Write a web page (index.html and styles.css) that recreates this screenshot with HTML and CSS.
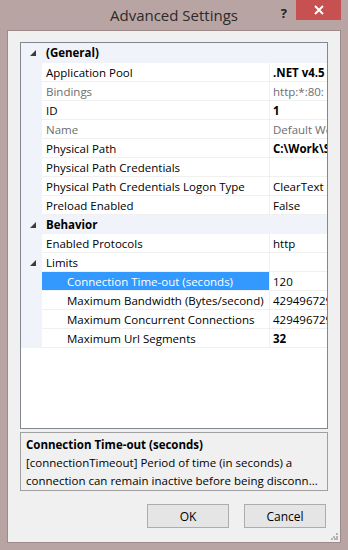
FILE: index.html
```html
<!DOCTYPE html>
<html lang="en">
<head>
    <meta charset="UTF-8">
    <title>Advanced Settings</title>
    <link rel="stylesheet" href="styles.css">
</head>
<body>

    <div class="window">

        <!-- Title bar -->
        <div class="titlebar">
            <span></span>
            <span class="title">Advanced Settings</span>
            <div class="controls">
                <span class="help">?</span>
                <span class="close">
                    <svg width="10" height="10" viewBox="0 0 10 10"><path d="M1 1 L9 9 M9 1 L1 9" stroke="#fff" stroke-width="2"/></svg>
                </span>
            </div>
        </div>

        <div class="client">

            <!-- Property grid -->
            <div class="grid">
                <div class="row category">
                    <span class="gutter"><svg width="6" height="6" viewBox="0 0 6 6"><polygon points="6,0 6,6 0,6" fill="#3c3c3c"/></svg></span>
                    <span class="name">(General)</span>
                </div>
                <div class="row"><span class="gutter"></span><span class="name">Application Pool</span><span class="value bold">.NET v4.5</span></div>
                <div class="row readonly"><span class="gutter"></span><span class="name">Bindings</span><span class="value">http:*:80:</span></div>
                <div class="row"><span class="gutter"></span><span class="name">ID</span><span class="value bold">1</span></div>
                <div class="row readonly"><span class="gutter"></span><span class="name">Name</span><span class="value">Default Web Site</span></div>
                <div class="row"><span class="gutter"></span><span class="name">Physical Path</span><span class="value bold">C:\Work\Site</span></div>
                <div class="row"><span class="gutter"></span><span class="name">Physical Path Credentials</span><span class="value"></span></div>
                <div class="row"><span class="gutter"></span><span class="name">Physical Path Credentials Logon Type</span><span class="value">ClearText</span></div>
                <div class="row"><span class="gutter"></span><span class="name">Preload Enabled</span><span class="value">False</span></div>
                <div class="row category">
                    <span class="gutter"><svg width="6" height="6" viewBox="0 0 6 6"><polygon points="6,0 6,6 0,6" fill="#3c3c3c"/></svg></span>
                    <span class="name">Behavior</span>
                </div>
                <div class="row"><span class="gutter"></span><span class="name">Enabled Protocols</span><span class="value">http</span></div>
                <div class="row">
                    <span class="gutter"><svg width="6" height="6" viewBox="0 0 6 6"><polygon points="6,0 6,6 0,6" fill="#3c3c3c"/></svg></span>
                    <span class="name">Limits</span><span class="value"></span>
                </div>
                <div class="row sub selected"><span class="gutter"></span><span class="name">Connection Time-out (seconds)</span><span class="value">120</span></div>
                <div class="row sub"><span class="gutter"></span><span class="name">Maximum Bandwidth (Bytes/second)</span><span class="value">4294967295</span></div>
                <div class="row sub"><span class="gutter"></span><span class="name">Maximum Concurrent Connections</span><span class="value">4294967295</span></div>
                <div class="row sub"><span class="gutter"></span><span class="name">Maximum Url Segments</span><span class="value bold">32</span></div>
            </div>

            <!-- Description panel -->
            <div class="desc">
                <div class="desc-title">Connection Time-out (seconds)</div>
                <div class="desc-text">[connectionTimeout] Period of time (in seconds) a<br>connection can remain inactive before being disconn...</div>
            </div>

            <!-- Dialog buttons -->
            <div class="buttons">
                <button class="btn">OK</button>
                <button class="btn">Cancel</button>
            </div>

            <svg class="grip" width="7" height="7" viewBox="0 0 7 7">
                <rect x="5" y="0" width="2" height="2" fill="#b4b4b4"/>
                <rect x="2" y="3" width="2" height="2" fill="#b4b4b4"/>
                <rect x="5" y="3" width="2" height="2" fill="#b4b4b4"/>
                <rect x="0" y="5" width="2" height="2" fill="#b4b4b4"/>
                <rect x="3" y="5" width="2" height="2" fill="#b4b4b4"/>
                <rect x="5" y="5" width="2" height="2" fill="#b4b4b4"/>
            </svg>
        </div>
    </div>

</body>
</html>
```

FILE: styles.css
```css
/* Reset */
* {
    margin: 0;
    padding: 0;
    box-sizing: border-box;
}

body {
    font-family: 'Open Sans', 'Noto Sans', sans-serif;
    font-size: 11.5px;
    color: #000;
}

/* Window frame */
.window {
    width: 348px;
    height: 550px;
    background: #b9a4a4;
    padding: 0 7px 7px 7px;
    display: flex;
    flex-direction: column;
}

.titlebar {
    height: 30px;
    margin: 0 -7px;
    display: grid;
    grid-template-columns: 1fr auto 1fr;
    align-items: start;
}

.title {
    font-size: 15px;
    color: #2b2b2b;
    line-height: 31px;
}

.controls {
    display: flex;
    justify-content: flex-end;
    align-items: flex-start;
    padding-right: 7px;
}

.help {
    font-weight: bold;
    font-size: 13px;
    color: #222;
    line-height: 20px;
    margin-right: 9px;
    margin-top: 3px;
}

.close {
    width: 45px;
    height: 20px;
    background: #c75050;
    display: flex;
    align-items: center;
    justify-content: center;
}

/* Client area */
.client {
    flex: 1;
    position: relative;
    background: #f0f0f0;
    border: 1px solid #9e8a8a;
    padding: 11px 12px 14px 12px;
    display: flex;
    flex-direction: column;
}

/* Property grid */
.grid {
    height: 387px;
    background: #fff;
    border: 1px solid #828790;
    overflow: hidden;
}

.row {
    display: flex;
    height: 19px;
}

.row:first-child {
    height: 20px;
}

.gutter {
    width: 21px;
    flex-shrink: 0;
    background: #f0f3f9;
    display: flex;
    align-items: center;
    justify-content: center;
    padding-left: 3px;
}

.name {
    width: 227px;
    flex-shrink: 0;
    padding: 2px 0 0 4px;
    line-height: 16px;
    white-space: nowrap;
    overflow: hidden;
    border-bottom: 1px solid #f0f0f0;
}

.value {
    flex: 1;
    padding: 2px 0 0 3px;
    line-height: 16px;
    white-space: nowrap;
    overflow: hidden;
    border-left: 1px solid #f0f0f0;
    border-bottom: 1px solid #f0f0f0;
}

.bold {
    font-weight: bold;
}

.readonly .name,
.readonly .value {
    color: #6d6d6d;
}

.category {
    background: #f0f3f9;
}

.category .name {
    font-weight: bold;
    border-bottom: none;
}

.sub .name {
    padding-left: 25px;
}

.selected .name {
    background: #3399ff;
    color: #fff;
}

/* Description panel */
.desc {
    margin-top: 3px;
    height: 59px;
    border: 1px solid #a0a0a0;
    padding: 3px 5px;
    line-height: 18px;
    white-space: nowrap;
    overflow: hidden;
}

.desc-title {
    font-weight: bold;
}

/* Buttons */
.buttons {
    margin-top: 13px;
    display: flex;
    justify-content: flex-end;
    gap: 15px;
    padding-right: 2px;
}

.btn {
    width: 82px;
    height: 24px;
    font-family: inherit;
    font-size: 12px;
    color: #000;
    background: #e5e5e5;
    border: 1px solid #acacac;
}

.grip {
    position: absolute;
    right: 2px;
    bottom: 2px;
}
```
